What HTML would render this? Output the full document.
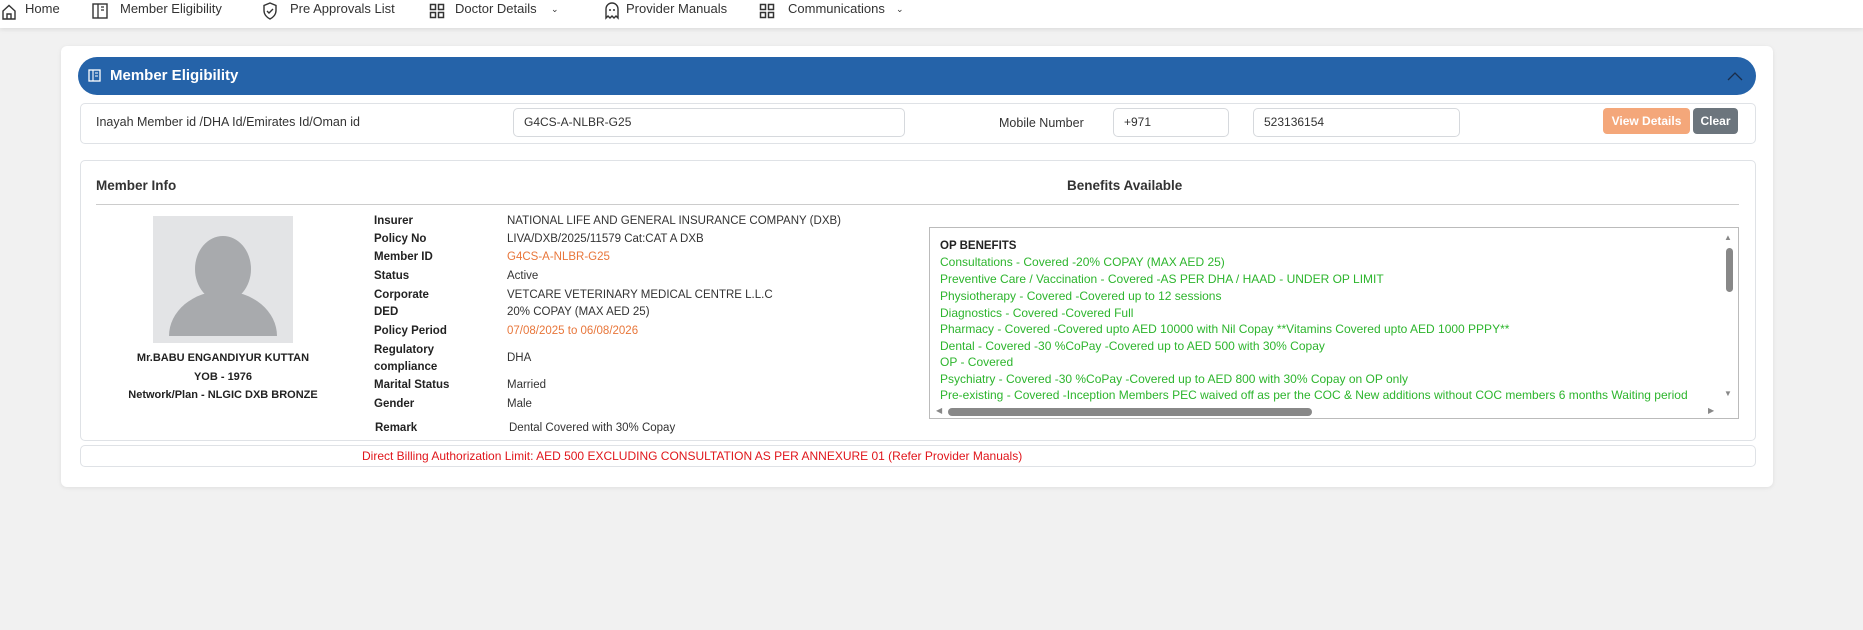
<!DOCTYPE html>
<html><head><meta charset="utf-8"><style>
*{box-sizing:border-box;margin:0;padding:0}
body{width:1863px;height:630px;background:#f1f1f1;font-family:"Liberation Sans",sans-serif;font-size:12px;color:#333;position:relative;overflow:hidden}
.a{position:absolute;white-space:nowrap}
.nav{position:absolute;left:0;top:0;width:1863px;height:28px;background:#fff;box-shadow:0 2px 4px rgba(0,0,0,.08)}
.nav .a{top:1px;font-size:13px;color:#333}
.card{position:absolute;left:61px;top:46px;width:1712px;height:441px;background:#fff;border-radius:6px;box-shadow:0 1px 4px rgba(0,0,0,.08)}
.bar{position:absolute;left:78px;top:57px;width:1678px;height:38px;background:#2563a9;border-radius:19px}
.box{position:absolute;border:1px solid #dfe2e6;border-radius:5px;background:#fff}
.inp{position:absolute;border:1px solid #d6d9dd;border-radius:5px;height:29px;padding:6px 10px;font-size:12px;color:#333}
.lbl{font-weight:bold;font-size:11.5px;color:#222}
.val{font-size:11.5px;color:#333}
.g{color:#2db52d;font-size:12px;left:940px}
</style></head><body>
<div class="nav">
<svg class="a" style="left:2px;top:4px" width="14" height="16" viewBox="0 0 14 16"><path d="M1 7L7 1.5 13 7V15H1Z M5 15V10h4v5" fill="none" stroke="#333" stroke-width="1.4"/></svg>
<span class="a" style="left:25px">Home</span>
<svg class="a" style="left:92px;top:3px" width="16" height="16"><rect x="1" y="1" width="14" height="14" fill="none" stroke="#333" stroke-width="1.4"/><path d="M6 1v14M9 4h3M9 7h3" stroke="#333" stroke-width="1.3"/></svg>
<span class="a" style="left:120px">Member Eligibility</span>
<svg class="a" style="left:262px;top:2px" width="16" height="18"><path d="M8 1l6 2.5v5c0 4-3 7-6 8.5C5 15.5 2 12.5 2 8.5v-5z" fill="none" stroke="#333" stroke-width="1.4"/><path d="M5 9l2 2 4-4" fill="none" stroke="#333" stroke-width="1.4"/></svg>
<span class="a" style="left:290px">Pre Approvals List</span>
<svg class="a" style="left:429px;top:3px" width="16" height="16"><g fill="none" stroke="#333" stroke-width="1.5"><rect x="1.5" y="1.5" width="5" height="5"/><rect x="9.5" y="1.5" width="5" height="5"/><rect x="1.5" y="9.5" width="5" height="5"/><rect x="9.5" y="9.5" width="5" height="5"/></g></svg>
<span class="a" style="left:455px">Doctor Details</span><span class="a" style="left:551px;font-size:9px;top:4px">⌄</span>
<svg class="a" style="left:604px;top:2px" width="16" height="18"><path d="M2 16V7a6 6 0 0 1 12 0v9l-2-2-2 2-2-2-2 2-2-2z" fill="none" stroke="#333" stroke-width="1.4"/><circle cx="6" cy="8" r="1" fill="#333"/><circle cx="10" cy="8" r="1" fill="#333"/></svg>
<span class="a" style="left:626px">Provider Manuals</span>
<svg class="a" style="left:759px;top:3px" width="16" height="16"><g fill="none" stroke="#333" stroke-width="1.5"><rect x="1.5" y="1.5" width="5" height="5"/><rect x="9.5" y="1.5" width="5" height="5"/><rect x="1.5" y="9.5" width="5" height="5"/><rect x="9.5" y="9.5" width="5" height="5"/></g></svg>
<span class="a" style="left:788px">Communications</span><span class="a" style="left:896px;font-size:9px;top:4px">⌄</span>
</div>
<div class="card"></div>
<div class="bar"></div>
<svg class="a" style="left:88px;top:69px" width="13" height="13"><rect x="1" y="1" width="11" height="11" fill="none" stroke="#fff" stroke-width="1.3"/><path d="M5 1v11M7 4h3M7 7h3" stroke="#fff" stroke-width="1.1"/></svg>
<span class="a" style="left:110px;top:67px;color:#fff;font-size:15px;font-weight:bold">Member Eligibility</span>
<svg class="a" style="left:1726px;top:70px" width="18" height="12"><path d="M2 10l7-7 7 7" fill="none" stroke="#1a2d4a" stroke-width="1.3"/></svg>

<div class="box" style="left:80px;top:103px;width:1676px;height:41px"></div>
<span class="a" style="left:96px;top:115px;font-size:12.5px">Inayah Member id /DHA Id/Emirates Id/Oman id</span>
<div class="inp" style="left:513px;top:108px;width:392px">G4CS-A-NLBR-G25</div>
<span class="a" style="left:999px;top:116px;font-size:12.5px">Mobile Number</span>
<div class="inp" style="left:1113px;top:108px;width:116px">+971</div>
<div class="inp" style="left:1253px;top:108px;width:207px">523136154</div>
<div class="a" style="left:1603px;top:108px;width:87px;height:26px;background:#f4a77a;border-radius:4px;color:#fff;font-weight:bold;font-size:12px;text-align:center;line-height:26px">View Details</div>
<div class="a" style="left:1693px;top:108px;width:45px;height:26px;background:#6c757d;border-radius:4px;color:#fff;font-weight:bold;font-size:12px;text-align:center;line-height:26px">Clear</div>

<div class="box" style="left:80px;top:160px;width:1676px;height:281px"></div>
<span class="a" style="left:96px;top:178px;font-size:13.5px;font-weight:bold">Member Info</span>
<span class="a" style="left:1067px;top:178px;font-size:13.5px;font-weight:bold">Benefits Available</span>
<div class="a" style="left:96px;top:204px;width:1643px;height:1px;background:#ccc"></div>
<svg class="a" style="left:153px;top:216px" width="140" height="127"><rect width="140" height="127" fill="#e3e4e6"/><ellipse cx="70" cy="53" rx="28" ry="33" fill="#a8aaad"/><path d="M16 120a54 45 0 0 1 108 0z" fill="#a8aaad"/></svg>
<div class="a" style="left:103px;top:349px;width:240px;text-align:center;font-weight:bold;font-size:11px;line-height:18.5px;color:#222">Mr.BABU ENGANDIYUR KUTTAN<br>YOB - 1976<br>Network/Plan - NLGIC DXB BRONZE</div>

<span class="a lbl" style="left:374px;top:215px">Insurer</span><span class="a val" style="left:507px;top:215px">NATIONAL LIFE AND GENERAL INSURANCE COMPANY (DXB)</span>
<span class="a lbl" style="left:374px;top:233px">Policy No</span><span class="a val" style="left:507px;top:233px">LIVA/DXB/2025/11579 Cat:CAT A DXB</span>
<span class="a lbl" style="left:374px;top:251px">Member ID</span><span class="a val" style="left:507px;top:251px;color:#e8763a">G4CS-A-NLBR-G25</span>
<span class="a lbl" style="left:374px;top:270px">Status</span><span class="a val" style="left:507px;top:270px">Active</span>
<span class="a lbl" style="left:374px;top:289px">Corporate</span><span class="a val" style="left:507px;top:289px">VETCARE VETERINARY MEDICAL CENTRE L.L.C</span>
<span class="a lbl" style="left:374px;top:306px">DED</span><span class="a val" style="left:507px;top:306px">20% COPAY (MAX AED 25)</span>
<span class="a lbl" style="left:374px;top:325px">Policy Period</span><span class="a val" style="left:507px;top:325px;color:#e8763a">07/08/2025 to 06/08/2026</span>
<span class="a lbl" style="left:374px;top:344px">Regulatory</span><span class="a lbl" style="left:374px;top:361px">compliance</span><span class="a val" style="left:507px;top:352px">DHA</span>
<span class="a lbl" style="left:374px;top:379px">Marital Status</span><span class="a val" style="left:507px;top:379px">Married</span>
<span class="a lbl" style="left:374px;top:398px">Gender</span><span class="a val" style="left:507px;top:398px">Male</span>
<span class="a lbl" style="left:375px;top:422px">Remark</span><span class="a val" style="left:509px;top:422px">Dental Covered with 30% Copay</span>

<div class="a" style="left:929px;top:227px;width:810px;height:192px;border:1px solid #bbb;background:#fff"></div>
<span class="a" style="left:940px;top:240px;font-weight:bold;font-size:11.5px;color:#222">OP BENEFITS</span>
<span class="a g" style="top:255px">Consultations - Covered -20% COPAY (MAX AED 25)</span>
<span class="a g" style="top:272px">Preventive Care / Vaccination - Covered -AS PER DHA / HAAD - UNDER OP LIMIT</span>
<span class="a g" style="top:289px">Physiotherapy - Covered -Covered up to 12 sessions</span>
<span class="a g" style="top:306px">Diagnostics - Covered -Covered Full</span>
<span class="a g" style="top:322px">Pharmacy - Covered -Covered upto AED 10000 with Nil Copay **Vitamins Covered upto AED 1000 PPPY**</span>
<span class="a g" style="top:339px">Dental - Covered -30 %CoPay -Covered up to AED 500 with 30% Copay</span>
<span class="a g" style="top:355px">OP - Covered</span>
<span class="a g" style="top:372px">Psychiatry - Covered -30 %CoPay -Covered up to AED 800 with 30% Copay on OP only</span>
<span class="a g" style="top:388px">Pre-existing - Covered -Inception Members PEC waived off as per the COC &amp; New additions without COC members 6 months Waiting period</span>
<span class="a" style="left:1724px;top:233px;font-size:8px;color:#888">▲</span>
<div class="a" style="left:1726px;top:248px;width:7px;height:44px;background:#888;border-radius:4px"></div>
<span class="a" style="left:1724px;top:389px;font-size:8px;color:#888">▼</span>
<span class="a" style="left:936px;top:406px;font-size:8px;color:#888">◀</span>
<div class="a" style="left:948px;top:408px;width:364px;height:8px;background:#888;border-radius:4px"></div>
<span class="a" style="left:1708px;top:406px;font-size:8px;color:#888">▶</span>

<div class="box" style="left:80px;top:445px;width:1676px;height:22px"></div>
<span class="a" style="left:362px;top:449px;color:#e0161b;font-size:12px">Direct Billing Authorization Limit: AED 500 EXCLUDING CONSULTATION AS PER ANNEXURE 01 (Refer Provider Manuals)</span>
</body></html>
